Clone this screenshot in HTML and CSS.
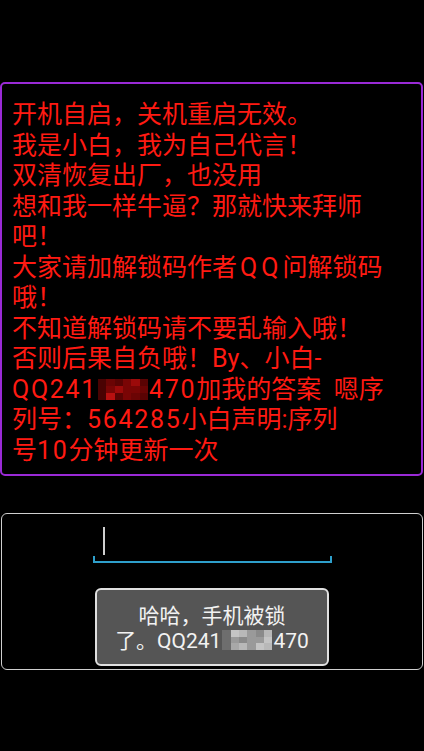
FILE: index.html
```html
<!DOCTYPE html>
<html lang="zh-CN">
<head>
<meta charset="utf-8">
<title>锁屏</title>
<link rel="stylesheet" href="styles.css">
</head>
<body>
<div class="screen">
  <div class="topbar"></div>
  <div class="message">
    <p class="msg-text">开机自启，关机重启无效。<br>我是小白，我为自己代言！<br>双清恢复出厂，也没用<br>想和我一样牛逼？那就快来拜师<br>吧！<br>大家请加解锁码作者<span class="qq">QQ</span>问解锁码<br>哦！<br>不知道解锁码请不要乱输入哦！<br>否则后果自负哦！By、小白-<br><span class="lat">QQ241</span><span class="blur blur-red"><span class="grid"><i></i><i></i><i></i><i></i><i></i><i></i><i></i><i></i><i></i><i></i><i></i><i></i><i></i><i></i><i></i><i></i><i></i><i></i></span></span><span class="lat">470</span>加我的答案&nbsp;&nbsp;嗯序<br>列号：<span class="lat">564285</span>小白声明:序列<br>号<span class="lat">10</span>分钟更新一次</p>
  </div>
  <div class="panel">
    <div class="field"><span class="cursor"></span></div>
    <div class="toast">哈哈，手机被锁<br>了。QQ241<span class="blur blur-grey"><span class="grid"><i></i><i></i><i></i><i></i><i></i><i></i><i></i><i></i><i></i><i></i><i></i><i></i><i></i><i></i><i></i><i></i><i></i><i></i></span></span>470</div>
  </div>
</div>
</body>
</html>
```

FILE: styles.css
```css
html, body {
  margin: 0;
  padding: 0;
  background: #000;
}

body {
  width: 424px;
  height: 751px;
  overflow: hidden;
  font-family: "Roboto", "Noto Sans CJK SC", sans-serif;
}

.screen {
  display: flex;
  flex-direction: column;
  height: 751px;
}

.topbar {
  height: 82px;
  flex: none;
}

.message {
  margin: 0 1px 0 0;
  border: 2px solid #9a2ad6;
  border-radius: 5px;
  padding: 16px 10px 6px 10px;
  height: 394px;
  box-sizing: border-box;
}

.msg-text {
  margin: 0;
  color: #ff1a12;
  font-size: 25px;
  line-height: 30.5px;
  white-space: nowrap;
}

.lat {
  letter-spacing: 1.7px;
}

.qq {
  letter-spacing: 4px;
  margin-left: 3px;
}

.blur {
  display: inline-block;
  overflow: hidden;
  vertical-align: -2px;
  margin: 0 1px;
}

.blur .grid {
  display: grid;
  width: 100%;
  height: 100%;
  grid-template-columns: repeat(6, 1fr);
  grid-template-rows: repeat(3, 1fr);
}

.blur i {
  display: block;
}

.blur-red {
  width: 50px;
  height: 21px;
}

.blur-red i { background: #7a0505; }
.blur-red i:nth-child(3n) { background: #5a0303; }
.blur-red i:nth-child(4n+1) { background: #9c0a0a; }
.blur-red i:nth-child(5n+2) { background: #6b0404; }
.blur-red i:nth-child(7n) { background: #b81010; }
.blur-red i:nth-child(1), .blur-red i:nth-child(7), .blur-red i:nth-child(13) { background: #4a0202; }

.blur-grey {
  width: 50px;
  height: 20px;
}

.blur-grey i { background: #9a9a9a; }
.blur-grey i:nth-child(3n) { background: #b8b8b8; }
.blur-grey i:nth-child(4n+1) { background: #8a8a8a; }
.blur-grey i:nth-child(5n+2) { background: #c4c4c4; }
.blur-grey i:nth-child(7n) { background: #a8a8a8; }
.blur-grey i:nth-child(1), .blur-grey i:nth-child(7), .blur-grey i:nth-child(13) { background: #6e6e6e; }

.panel {
  position: relative;
  margin: 37px 1px 0 1px;
  height: 157px;
  box-sizing: border-box;
  border: 1.5px solid #cfcfcf;
  border-radius: 6px;
  padding-top: 11px;
}

.field {
  position: relative;
  margin-left: 91px;
  width: 239px;
  height: 34px;
  border-bottom: 2px solid #2e9fcb;
}

.field::before,
.field::after {
  content: "";
  position: absolute;
  bottom: 0;
  width: 2px;
  height: 5px;
  background: #2e9fcb;
}

.field::before { left: 0; }
.field::after { right: 0; }

.cursor {
  display: block;
  margin-left: 10px;
  margin-top: 2px;
  width: 1.5px;
  height: 28px;
  background: #cfcfcf;
}

.toast {
  position: absolute;
  left: 50%;
  top: 74px;
  transform: translateX(-50%);
  width: 234px;
  box-sizing: border-box;
  padding: 14px 8px 10px;
  background: #555;
  border: 2px solid #e0e0e0;
  border-radius: 6px;
  color: #f2f2f2;
  font-size: 21px;
  line-height: 25px;
  text-align: center;
  white-space: nowrap;
}
```
